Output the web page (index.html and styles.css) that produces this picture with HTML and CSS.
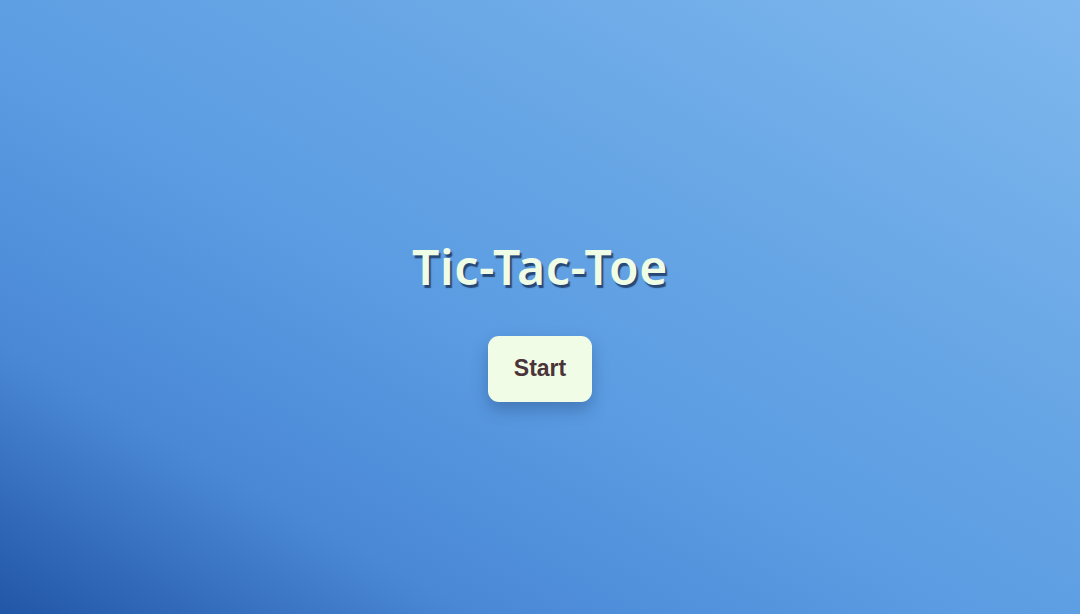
FILE: index.html
```html
<!DOCTYPE html>
<html>
<head>
<meta charset="utf-8">
<link rel="stylesheet" href="styles.css">
</head>
<body>
<main class="screen">
  <h1 class="title">Tic-Tac-Toe</h1>
  <button class="start">Start</button>
</main>
</body>
</html>
```
FILE: styles.css
```css
html, body {
  margin: 0;
  height: 100%;
}
body {
  background: linear-gradient(to top right, #2256a6 0%, #4a88d6 22%, #5b9ce2 45%, #6aa8e6 70%, #7fb8ee 100%);
  font-family: "Liberation Sans", Arial, sans-serif;
}
.screen {
  box-sizing: border-box;
  height: 100%;
  padding-top: 26px;
  display: flex;
  flex-direction: column;
  align-items: center;
  justify-content: center;
}
.title {
  margin: 0 0 40px 0;
  font-family: "Noto Sans", sans-serif;
  font-weight: 600;
  font-size: 48px;
  line-height: 1.2;
  letter-spacing: 0.6px;
  color: #effce6;
  text-shadow: 2px 3px 1px rgba(25, 50, 90, 0.8);
}
.start {
  width: 104px;
  height: 66px;
  border: none;
  border-radius: 11px;
  background: #f1fce7;
  color: #4a3438;
  font-family: "Liberation Sans", Arial, sans-serif;
  font-weight: bold;
  font-size: 23px;
  box-shadow: 0 8px 16px rgba(30, 60, 110, 0.35);
  cursor: pointer;
}
```
